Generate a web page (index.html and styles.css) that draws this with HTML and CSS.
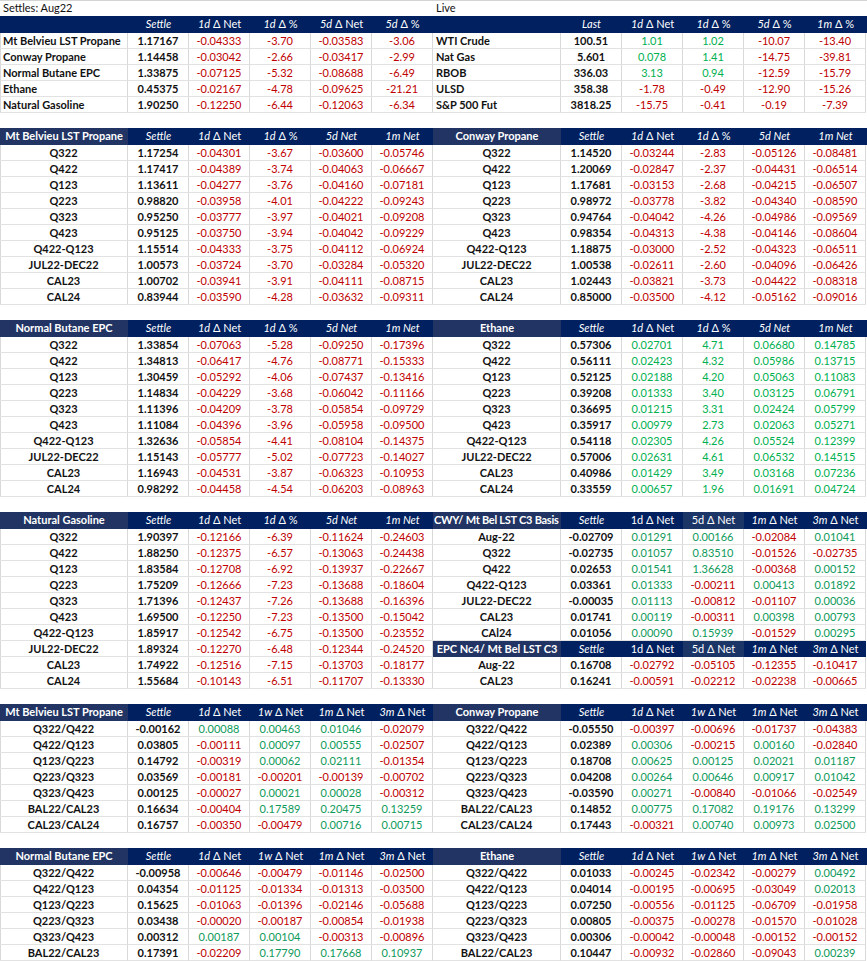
FILE: index.html
```html
<!DOCTYPE html>
<html>
<head>
<meta charset="utf-8">
<title>Settles</title>
<link rel="stylesheet" href="styles.css">
</head>
<body>
<div class="sheet">
<div class="title"><span>Settles: Aug22</span><span>Live</span></div>

<div class="row hd"><span></span><span><i>Settle</i></span><span><i>1d</i> Δ Net</span><span><i>1d</i> Δ %</span><span><i>5d</i> Δ Net</span><span><i>5d</i> Δ %</span><span></span><span><i>Last</i></span><span><i>1d</i> Δ Net</span><span><i>1d</i> Δ %</span><span><i>5d</i> Δ %</span><span><i>1m</i> Δ %</span></div>
<div class="row top"><span>Mt Belvieu LST Propane</span><span>1.17167</span><span>-0.04333</span><span>-3.70</span><span>-0.03583</span><span>-3.06</span><span>WTI Crude</span><span>100.51</span><span class="g">1.01</span><span class="g">1.02</span><span>-10.07</span><span>-13.40</span></div>
<div class="row top"><span>Conway Propane</span><span>1.14458</span><span>-0.03042</span><span>-2.66</span><span>-0.03417</span><span>-2.99</span><span>Nat Gas</span><span>5.601</span><span class="g">0.078</span><span class="g">1.41</span><span>-14.75</span><span>-39.81</span></div>
<div class="row top"><span>Normal Butane EPC</span><span>1.33875</span><span>-0.07125</span><span>-5.32</span><span>-0.08688</span><span>-6.49</span><span>RBOB</span><span>336.03</span><span class="g">3.13</span><span class="g">0.94</span><span>-12.59</span><span>-15.79</span></div>
<div class="row top"><span>Ethane</span><span>0.45375</span><span>-0.02167</span><span>-4.78</span><span>-0.09625</span><span>-21.21</span><span>ULSD</span><span>358.38</span><span>-1.78</span><span>-0.49</span><span>-12.90</span><span>-15.26</span></div>
<div class="row top"><span>Natural Gasoline</span><span>1.90250</span><span>-0.12250</span><span>-6.44</span><span>-0.12063</span><span>-6.34</span><span>S&amp;P 500 Fut</span><span>3818.25</span><span>-15.75</span><span>-0.41</span><span>-0.19</span><span>-7.39</span></div>
<div class="gap"></div>

<div class="row hd"><span class="hl">Mt Belvieu LST Propane</span><span><i>Settle</i></span><span><i>1d</i> Δ Net</span><span><i>1d</i> Δ %</span><span><i>5d Net</i></span><span><i>1m Net</i></span><span class="hl">Conway Propane</span><span><i>Settle</i></span><span><i>1d</i> Δ Net</span><span><i>1d</i> Δ %</span><span><i>5d Net</i></span><span><i>1m Net</i></span></div>
<div class="row"><span>Q322</span><span>1.17254</span><span>-0.04301</span><span>-3.67</span><span>-0.03600</span><span>-0.05746</span><span>Q322</span><span>1.14520</span><span>-0.03244</span><span>-2.83</span><span>-0.05126</span><span>-0.08481</span></div>
<div class="row"><span>Q422</span><span>1.17417</span><span>-0.04389</span><span>-3.74</span><span>-0.04063</span><span>-0.06667</span><span>Q422</span><span>1.20069</span><span>-0.02847</span><span>-2.37</span><span>-0.04431</span><span>-0.06514</span></div>
<div class="row"><span>Q123</span><span>1.13611</span><span>-0.04277</span><span>-3.76</span><span>-0.04160</span><span>-0.07181</span><span>Q123</span><span>1.17681</span><span>-0.03153</span><span>-2.68</span><span>-0.04215</span><span>-0.06507</span></div>
<div class="row"><span>Q223</span><span>0.98820</span><span>-0.03958</span><span>-4.01</span><span>-0.04222</span><span>-0.09243</span><span>Q223</span><span>0.98972</span><span>-0.03778</span><span>-3.82</span><span>-0.04340</span><span>-0.08590</span></div>
<div class="row"><span>Q323</span><span>0.95250</span><span>-0.03777</span><span>-3.97</span><span>-0.04021</span><span>-0.09208</span><span>Q323</span><span>0.94764</span><span>-0.04042</span><span>-4.26</span><span>-0.04986</span><span>-0.09569</span></div>
<div class="row"><span>Q423</span><span>0.95125</span><span>-0.03750</span><span>-3.94</span><span>-0.04042</span><span>-0.09229</span><span>Q423</span><span>0.98354</span><span>-0.04313</span><span>-4.38</span><span>-0.04146</span><span>-0.08604</span></div>
<div class="row"><span>Q422-Q123</span><span>1.15514</span><span>-0.04333</span><span>-3.75</span><span>-0.04112</span><span>-0.06924</span><span>Q422-Q123</span><span>1.18875</span><span>-0.03000</span><span>-2.52</span><span>-0.04323</span><span>-0.06511</span></div>
<div class="row"><span>JUL22-DEC22</span><span>1.00573</span><span>-0.03724</span><span>-3.70</span><span>-0.03284</span><span>-0.05320</span><span>JUL22-DEC22</span><span>1.00538</span><span>-0.02611</span><span>-2.60</span><span>-0.04096</span><span>-0.06426</span></div>
<div class="row"><span>CAL23</span><span>1.00702</span><span>-0.03941</span><span>-3.91</span><span>-0.04111</span><span>-0.08715</span><span>CAL23</span><span>1.02443</span><span>-0.03821</span><span>-3.73</span><span>-0.04422</span><span>-0.08318</span></div>
<div class="row"><span>CAL24</span><span>0.83944</span><span>-0.03590</span><span>-4.28</span><span>-0.03632</span><span>-0.09311</span><span>CAL24</span><span>0.85000</span><span>-0.03500</span><span>-4.12</span><span>-0.05162</span><span>-0.09016</span></div>
<div class="gap"></div>

<div class="row hd"><span class="hl">Normal Butane EPC</span><span><i>Settle</i></span><span><i>1d</i> Δ Net</span><span><i>1d</i> Δ %</span><span><i>5d Net</i></span><span><i>1m Net</i></span><span class="hl">Ethane</span><span><i>Settle</i></span><span><i>1d</i> Δ Net</span><span><i>1d</i> Δ %</span><span><i>5d Net</i></span><span><i>1m Net</i></span></div>
<div class="row"><span>Q322</span><span>1.33854</span><span>-0.07063</span><span>-5.28</span><span>-0.09250</span><span>-0.17396</span><span>Q322</span><span>0.57306</span><span class="g">0.02701</span><span class="g">4.71</span><span class="g">0.06680</span><span class="g">0.14785</span></div>
<div class="row"><span>Q422</span><span>1.34813</span><span>-0.06417</span><span>-4.76</span><span>-0.08771</span><span>-0.15333</span><span>Q422</span><span>0.56111</span><span class="g">0.02423</span><span class="g">4.32</span><span class="g">0.05986</span><span class="g">0.13715</span></div>
<div class="row"><span>Q123</span><span>1.30459</span><span>-0.05292</span><span>-4.06</span><span>-0.07437</span><span>-0.13416</span><span>Q123</span><span>0.52125</span><span class="g">0.02188</span><span class="g">4.20</span><span class="g">0.05063</span><span class="g">0.11083</span></div>
<div class="row"><span>Q223</span><span>1.14834</span><span>-0.04229</span><span>-3.68</span><span>-0.06042</span><span>-0.11166</span><span>Q223</span><span>0.39208</span><span class="g">0.01333</span><span class="g">3.40</span><span class="g">0.03125</span><span class="g">0.06791</span></div>
<div class="row"><span>Q323</span><span>1.11396</span><span>-0.04209</span><span>-3.78</span><span>-0.05854</span><span>-0.09729</span><span>Q323</span><span>0.36695</span><span class="g">0.01215</span><span class="g">3.31</span><span class="g">0.02424</span><span class="g">0.05799</span></div>
<div class="row"><span>Q423</span><span>1.11084</span><span>-0.04396</span><span>-3.96</span><span>-0.05958</span><span>-0.09500</span><span>Q423</span><span>0.35917</span><span class="g">0.00979</span><span class="g">2.73</span><span class="g">0.02063</span><span class="g">0.05271</span></div>
<div class="row"><span>Q422-Q123</span><span>1.32636</span><span>-0.05854</span><span>-4.41</span><span>-0.08104</span><span>-0.14375</span><span>Q422-Q123</span><span>0.54118</span><span class="g">0.02305</span><span class="g">4.26</span><span class="g">0.05524</span><span class="g">0.12399</span></div>
<div class="row"><span>JUL22-DEC22</span><span>1.15143</span><span>-0.05777</span><span>-5.02</span><span>-0.07723</span><span>-0.14027</span><span>JUL22-DEC22</span><span>0.57006</span><span class="g">0.02631</span><span class="g">4.61</span><span class="g">0.06532</span><span class="g">0.14515</span></div>
<div class="row"><span>CAL23</span><span>1.16943</span><span>-0.04531</span><span>-3.87</span><span>-0.06323</span><span>-0.10953</span><span>CAL23</span><span>0.40986</span><span class="g">0.01429</span><span class="g">3.49</span><span class="g">0.03168</span><span class="g">0.07236</span></div>
<div class="row"><span>CAL24</span><span>0.98292</span><span>-0.04458</span><span>-4.54</span><span>-0.06203</span><span>-0.08963</span><span>CAL24</span><span>0.33559</span><span class="g">0.00657</span><span class="g">1.96</span><span class="g">0.01691</span><span class="g">0.04724</span></div>
<div class="gap"></div>

<div class="row hd"><span class="hl">Natural Gasoline</span><span><i>Settle</i></span><span><i>1d</i> Δ Net</span><span><i>1d</i> Δ %</span><span><i>5d Net</i></span><span><i>1m Net</i></span><span class="hl cwy">CWY/ Mt Bel LST C3 Basis</span><span><i>Settle</i></span><span>1d Δ Net</span><span class="lt">5d Δ Net</span><span><i>1m</i> Δ Net</span><span><i>3m</i> Δ Net</span></div>
<div class="row"><span>Q322</span><span>1.90397</span><span>-0.12166</span><span>-6.39</span><span>-0.11624</span><span>-0.24603</span><span>Aug-22</span><span>-0.02709</span><span class="s">0.01291</span><span class="s">0.00166</span><span>-0.02084</span><span class="s">0.01041</span></div>
<div class="row"><span>Q422</span><span>1.88250</span><span>-0.12375</span><span>-6.57</span><span>-0.13063</span><span>-0.24438</span><span>Q322</span><span>-0.02735</span><span class="s">0.01057</span><span class="s">0.83510</span><span>-0.01526</span><span>-0.02735</span></div>
<div class="row"><span>Q123</span><span>1.83584</span><span>-0.12708</span><span>-6.92</span><span>-0.13937</span><span>-0.22667</span><span>Q422</span><span>0.02653</span><span class="s">0.01541</span><span class="s">1.36628</span><span>-0.00368</span><span class="s">0.00152</span></div>
<div class="row"><span>Q223</span><span>1.75209</span><span>-0.12666</span><span>-7.23</span><span>-0.13688</span><span>-0.18604</span><span>Q422-Q123</span><span>0.03361</span><span class="s">0.01333</span><span>-0.00211</span><span class="s">0.00413</span><span class="s">0.01892</span></div>
<div class="row"><span>Q323</span><span>1.71396</span><span>-0.12437</span><span>-7.26</span><span>-0.13688</span><span>-0.16396</span><span>JUL22-DEC22</span><span>-0.00035</span><span class="s">0.01113</span><span>-0.00812</span><span>-0.01107</span><span class="s">0.00036</span></div>
<div class="row"><span>Q423</span><span>1.69500</span><span>-0.12250</span><span>-7.23</span><span>-0.13500</span><span>-0.15042</span><span>CAL23</span><span>0.01741</span><span class="s">0.00119</span><span>-0.00311</span><span class="s">0.00398</span><span class="s">0.00793</span></div>
<div class="row"><span>Q422-Q123</span><span>1.85917</span><span>-0.12542</span><span>-6.75</span><span>-0.13500</span><span>-0.23552</span><span>CAl24</span><span>0.01056</span><span class="s">0.00090</span><span class="s">0.15939</span><span>-0.01529</span><span class="s">0.00295</span></div>
<div class="row"><span>JUL22-DEC22</span><span>1.89324</span><span>-0.12270</span><span>-6.48</span><span>-0.12344</span><span>-0.24520</span><span class="h hl">EPC Nc4/ Mt Bel LST C3</span><span class="h"><i>Settle</i></span><span class="h">1d Δ Net</span><span class="h lt">5d Δ Net</span><span class="h"><i>1m</i> Δ Net</span><span class="h"><i>3m</i> Δ Net</span></div>
<div class="row"><span>CAL23</span><span>1.74922</span><span>-0.12516</span><span>-7.15</span><span>-0.13703</span><span>-0.18177</span><span>Aug-22</span><span>0.16708</span><span>-0.02792</span><span>-0.05105</span><span>-0.12355</span><span>-0.10417</span></div>
<div class="row"><span>CAL24</span><span>1.55684</span><span>-0.10143</span><span>-6.51</span><span>-0.11707</span><span>-0.13330</span><span>CAL23</span><span>0.16241</span><span>-0.00591</span><span>-0.02212</span><span>-0.02238</span><span>-0.00665</span></div>
<div class="gap"></div>

<div class="row hd"><span class="hl">Mt Belvieu LST Propane</span><span><i>Settle</i></span><span><i>1d</i> Δ Net</span><span><i>1w</i> Δ Net</span><span><i>1m</i> Δ Net</span><span><i>3m</i> Δ Net</span><span class="hl">Conway Propane</span><span><i>Settle</i></span><span><i>1d</i> Δ Net</span><span><i>1w</i> Δ Net</span><span><i>1m</i> Δ Net</span><span><i>3m</i> Δ Net</span></div>
<div class="row"><span>Q322/Q422</span><span>-0.00162</span><span class="s">0.00088</span><span class="s">0.00463</span><span class="s">0.01046</span><span>-0.02079</span><span>Q322/Q422</span><span>-0.05550</span><span>-0.00397</span><span>-0.00696</span><span>-0.01737</span><span>-0.04383</span></div>
<div class="row"><span>Q422/Q123</span><span>0.03805</span><span>-0.00111</span><span class="s">0.00097</span><span class="s">0.00555</span><span>-0.02507</span><span>Q422/Q123</span><span>0.02389</span><span class="s">0.00306</span><span>-0.00215</span><span class="s">0.00160</span><span>-0.02840</span></div>
<div class="row"><span>Q123/Q223</span><span>0.14792</span><span>-0.00319</span><span class="s">0.00062</span><span class="s">0.02111</span><span>-0.01354</span><span>Q123/Q223</span><span>0.18708</span><span class="s">0.00625</span><span class="s">0.00125</span><span class="s">0.02021</span><span class="s">0.01187</span></div>
<div class="row"><span>Q223/Q323</span><span>0.03569</span><span>-0.00181</span><span>-0.00201</span><span>-0.00139</span><span>-0.00702</span><span>Q223/Q323</span><span>0.04208</span><span class="s">0.00264</span><span class="s">0.00646</span><span class="s">0.00917</span><span class="s">0.01042</span></div>
<div class="row"><span>Q323/Q423</span><span>0.00125</span><span>-0.00027</span><span class="s">0.00021</span><span class="s">0.00028</span><span>-0.00312</span><span>Q323/Q423</span><span>-0.03590</span><span class="s">0.00271</span><span>-0.00840</span><span>-0.01066</span><span>-0.02549</span></div>
<div class="row"><span>BAL22/CAL23</span><span>0.16634</span><span>-0.00404</span><span class="s">0.17589</span><span class="s">0.20475</span><span class="s">0.13259</span><span>BAL22/CAL23</span><span>0.14852</span><span class="s">0.00775</span><span class="s">0.17082</span><span class="s">0.19176</span><span class="s">0.13299</span></div>
<div class="row"><span>CAL23/CAL24</span><span>0.16757</span><span>-0.00350</span><span>-0.00479</span><span class="s">0.00716</span><span class="s">0.00715</span><span>CAL23/CAL24</span><span>0.17443</span><span>-0.00321</span><span class="s">0.00740</span><span class="s">0.00973</span><span class="s">0.02500</span></div>
<div class="gap"></div>

<div class="row hd"><span class="hl">Normal Butane EPC</span><span><i>Settle</i></span><span><i>1d</i> Δ Net</span><span><i>1w</i> Δ Net</span><span><i>1m</i> Δ Net</span><span><i>3m</i> Δ Net</span><span class="hl">Ethane</span><span><i>Settle</i></span><span><i>1d</i> Δ Net</span><span><i>1w</i> Δ Net</span><span><i>1m</i> Δ Net</span><span><i>3m</i> Δ Net</span></div>
<div class="row"><span>Q322/Q422</span><span>-0.00958</span><span>-0.00646</span><span>-0.00479</span><span>-0.01146</span><span>-0.02500</span><span>Q322/Q422</span><span>0.01033</span><span>-0.00245</span><span>-0.02342</span><span>-0.00279</span><span class="s">0.00492</span></div>
<div class="row"><span>Q422/Q123</span><span>0.04354</span><span>-0.01125</span><span>-0.01334</span><span>-0.01313</span><span>-0.03500</span><span>Q422/Q123</span><span>0.04014</span><span>-0.00195</span><span>-0.00695</span><span>-0.03049</span><span class="s">0.02013</span></div>
<div class="row"><span>Q123/Q223</span><span>0.15625</span><span>-0.01063</span><span>-0.01396</span><span>-0.02146</span><span>-0.05688</span><span>Q123/Q223</span><span>0.07250</span><span>-0.00556</span><span>-0.01125</span><span>-0.06709</span><span>-0.01958</span></div>
<div class="row"><span>Q223/Q323</span><span>0.03438</span><span>-0.00020</span><span>-0.00187</span><span>-0.00854</span><span>-0.01938</span><span>Q223/Q323</span><span>0.00805</span><span>-0.00375</span><span>-0.00278</span><span>-0.01570</span><span>-0.01028</span></div>
<div class="row"><span>Q323/Q423</span><span>0.00312</span><span class="s">0.00187</span><span class="s">0.00104</span><span>-0.00313</span><span>-0.00896</span><span>Q323/Q423</span><span>0.00306</span><span>-0.00042</span><span>-0.00048</span><span>-0.00152</span><span>-0.00152</span></div>
<div class="row"><span>BAL22/CAL23</span><span>0.17391</span><span>-0.02209</span><span class="s">0.17790</span><span class="s">0.17668</span><span class="s">0.10937</span><span>BAL22/CAL23</span><span>0.10447</span><span>-0.00932</span><span>-0.02860</span><span>-0.09043</span><span class="s">0.00239</span></div>
</div>
</body>
</html>
```

FILE: styles.css
```css
* { box-sizing: border-box; }

body {
  margin: 0;
  background: #ffffff;
  font-family: Lato, "Open Sans", "Liberation Sans", sans-serif;
  font-size: 11px;
  color: #111111;
}

.sheet { width: 867px; }

.title {
  display: grid;
  grid-template-columns: 433px 433px;
  height: 16px;
  border-top: 1px solid #d4d4d4;
  line-height: 14px;
  font-size: 11px;
}
.title span { padding-left: 3px; }

.row {
  display: grid;
  grid-template-columns: 128px repeat(5, 61px) 128px repeat(5, 61px);
  height: 16px;
}

.row > span {
  border-right: 1px solid #d9d9d9;
  border-bottom: 1px solid #e2e2e2;
  text-align: center;
  line-height: 15px;
  white-space: nowrap;
  overflow: hidden;
  color: #c00000;
}

.row > span:nth-child(6n+1),
.row > span:nth-child(6n+2) {
  color: #111111;
  font-weight: 700;
}

.row > span:first-child { box-shadow: inset 1px 0 #d9d9d9; }

.row > span.g { color: #00b050; }
.row > span.s { color: #0e9a5a; }

.top > span:nth-child(6n+1) {
  text-align: left;
  padding-left: 3px;
}

.row.hd { height: 17px; background: #002060; }

.row.hd > span,
.row > span.h {
  color: #ffffff;
  font-weight: 400;
  border: 0;
  box-shadow: none;
  background: #002060;
  line-height: 16px;
}

.row > span.hl {
  background: #213463;
  font-weight: 700;
  color: #ffffff;
}

.row > span.lt { background: #1b3567; }

.row > span.cwy {
  text-align: left;
  padding-left: 1px;
  letter-spacing: -0.25px;
}

.gap { height: 15px; }
```
